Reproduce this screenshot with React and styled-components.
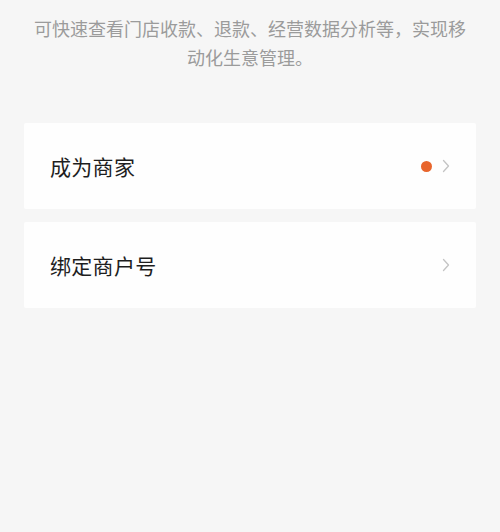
import React from "react";
import styled, { createGlobalStyle } from "styled-components";

const GlobalStyle = createGlobalStyle`
  html, body {
    margin: 0;
    padding: 0;
    background: #f6f6f6;
  }
  body {
    font-family: "Noto Sans CJK SC", "Noto Sans", sans-serif;
  }
`;

const Page = styled.div`
  min-height: 532px;
  background: #f6f6f6;
  padding-top: 14px;
  box-sizing: border-box;
`;

const Intro = styled.p`
  margin: 0 auto;
  width: 440px;
  text-align: center;
  font-size: 18px;
  line-height: 29px;
  color: #9b9b9b;
`;

const List = styled.div`
  display: flex;
  flex-direction: column;
  gap: 13px;
  margin: 51px 24px 0;
`;

const Card = styled.div`
  height: 86px;
  background: #fefefe;
  border-radius: 2px;
  display: flex;
  align-items: center;
  padding: 0 26px 0 26px;
  box-sizing: border-box;
`;

const Title = styled.span`
  flex: 1;
  font-size: 21px;
  color: #1e1e1e;
  letter-spacing: 0.3px;
`;

const Dot = styled.span`
  width: 11px;
  height: 11px;
  border-radius: 50%;
  background: #e8652c;
  margin-right: 10px;
`;

const Chevron = () => (
  <svg width="8" height="14" viewBox="0 0 8 14">
    <polyline
      points="1.5,1.5 6.5,7 1.5,12.5"
      fill="none"
      stroke="#c4c4c4"
      strokeWidth="1.3"
      strokeLinecap="round"
      strokeLinejoin="round"
    />
  </svg>
);

const items = [
  { title: "成为商家", badge: true },
  { title: "绑定商户号", badge: false },
];

export default function App() {
  return (
    <>
      <GlobalStyle />
      <Page>
        <Intro>可快速查看门店收款、退款、经营数据分析等，实现移动化生意管理。</Intro>
        <List>
          {items.map((item) => (
            <Card key={item.title}>
              <Title>{item.title}</Title>
              {item.badge && <Dot />}
              <Chevron />
            </Card>
          ))}
        </List>
      </Page>
    </>
  );
}
